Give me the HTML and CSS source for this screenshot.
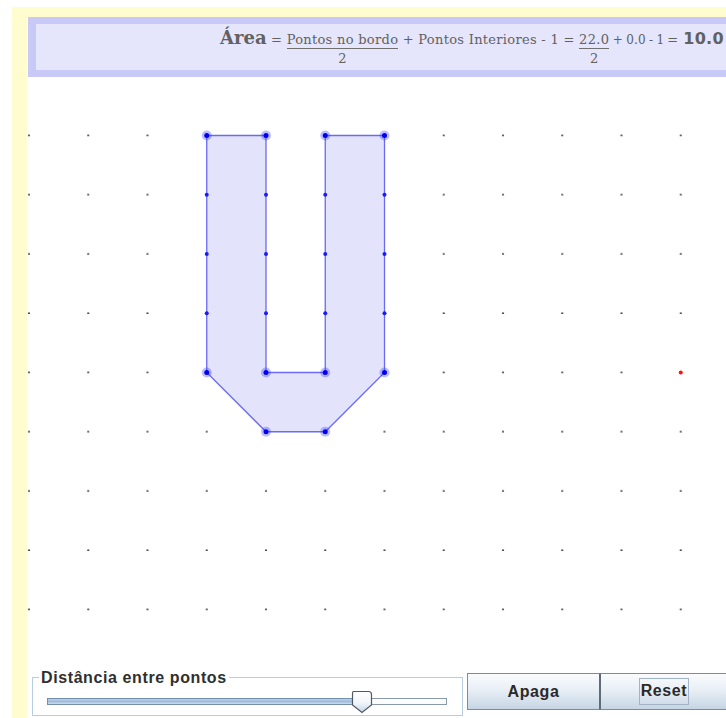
FILE: index.html
```html
<!DOCTYPE html>
<html lang="pt">
<head>
<meta charset="utf-8">
<title>Teorema de Pick</title>
<link rel="stylesheet" href="styles.css">
</head>
<body>
<div class="window">
  <div class="frame">
    <main class="board">
      <header class="formula">
        <span class="lhs">Área</span><span class="eq"> = </span><span class="frac"><span class="num">Pontos no bordo</span><span class="den">2</span></span><span class="term"> + Pontos Interiores - 1 = </span><span class="frac frac-value"><span class="num">22.0</span><span class="den">2</span></span><span class="term tail"> + 0.0 - 1</span><span class="eq-big">=</span><span class="result">10.0</span>
      </header>

      <svg class="grid" width="699" height="583" viewBox="0 0 699 583">
        <defs>
          <pattern id="lattice" patternUnits="userSpaceOnUse" x="0" y="0" width="59.25" height="59.25">
            <circle cx="2" cy="58.5" r="1.1" fill="#4a4a4a"/>
          </pattern>
        </defs>
        <rect x="0" y="0" width="699" height="583" fill="url(#lattice)"/>

        <!-- the U-shaped polygon -->
        <polygon class="shape"
          points="179.75,58.5 239,58.5 239,295.5 298.25,295.5 298.25,58.5 357.5,58.5 357.5,295.5 298.25,354.75 239,354.75 179.75,295.5"/>

        <!-- lattice points on the edges -->
        <g class="edge-pt">
          <circle cx="179.75" cy="117.75" r="2"/><circle cx="179.75" cy="177" r="2"/><circle cx="179.75" cy="236.25" r="2"/>
          <circle cx="239" cy="117.75" r="2"/><circle cx="239" cy="177" r="2"/><circle cx="239" cy="236.25" r="2"/>
          <circle cx="298.25" cy="117.75" r="2"/><circle cx="298.25" cy="177" r="2"/><circle cx="298.25" cy="236.25" r="2"/>
          <circle cx="357.5" cy="117.75" r="2"/><circle cx="357.5" cy="177" r="2"/><circle cx="357.5" cy="236.25" r="2"/>
        </g>

        <!-- vertices -->
        <g class="vertex-halo">
          <circle cx="179.75" cy="58.5" r="5"/><circle cx="239" cy="58.5" r="5"/><circle cx="298.25" cy="58.5" r="5"/><circle cx="357.5" cy="58.5" r="5"/>
          <circle cx="179.75" cy="295.5" r="5"/><circle cx="239" cy="295.5" r="5"/><circle cx="298.25" cy="295.5" r="5"/><circle cx="357.5" cy="295.5" r="5"/>
          <circle cx="239" cy="354.75" r="5"/><circle cx="298.25" cy="354.75" r="5"/>
        </g>
        <g class="vertex">
          <circle cx="179.75" cy="58.5" r="2.5"/><circle cx="239" cy="58.5" r="2.5"/><circle cx="298.25" cy="58.5" r="2.5"/><circle cx="357.5" cy="58.5" r="2.5"/>
          <circle cx="179.75" cy="295.5" r="2.5"/><circle cx="239" cy="295.5" r="2.5"/><circle cx="298.25" cy="295.5" r="2.5"/><circle cx="357.5" cy="295.5" r="2.5"/>
          <circle cx="239" cy="354.75" r="2.5"/><circle cx="298.25" cy="354.75" r="2.5"/>
        </g>

        <!-- pointer position -->
        <circle class="cursor" cx="653.75" cy="295.5" r="2"/>
      </svg>

      <div class="controls">
        <fieldset class="spacing">
          <legend>Distância entre pontos</legend>
          <svg class="slider" width="402" height="24" viewBox="0 0 402 24">
            <defs>
              <linearGradient id="fill" x1="0" y1="0" x2="0" y2="1">
                <stop offset="0" stop-color="#c3d6ea"/>
                <stop offset="0.5" stop-color="#9fbcdc"/>
                <stop offset="1" stop-color="#d6e3f1"/>
              </linearGradient>
              <linearGradient id="knob" x1="0" y1="0" x2="0" y2="1">
                <stop offset="0" stop-color="#ffffff"/>
                <stop offset="0.55" stop-color="#f2f6fb"/>
                <stop offset="1" stop-color="#bfd2e6"/>
              </linearGradient>
            </defs>
            <rect x="1.5" y="8.5" width="399" height="6" fill="#fbfcfd" stroke="#8c99a6"/>
            <rect x="1.5" y="8.5" width="314" height="6" fill="url(#fill)" stroke="#7590ad"/>
            <path d="M307.5 1.5 H322.5 Q325.5 1.5 325.5 4.5 V15 L316 22.5 L306.5 15 V4.5 Q306.5 1.5 307.5 1.5 Z" fill="url(#knob)" stroke="#4f5a66" stroke-width="1.2"/>
          </svg>
        </fieldset>
        <div class="buttons">
          <button class="btn btn-erase" type="button">Apaga</button>
          <button class="btn btn-reset" type="button"><span class="focus">Reset</span></button>
        </div>
      </div>
    </main>
  </div>
</div>
</body>
</html>
```

FILE: styles.css
```css
html, body {
  margin: 0;
  padding: 0;
  background: #ffffff;
  overflow: hidden;
}

.window {
  padding: 7px 0 0 12px;
  height: 718px;
  box-sizing: border-box;
}

.frame {
  background: #fffccf;
  padding: 10px 0 0 15px;
  height: 711px;
  box-sizing: border-box;
}

.board {
  display: block;
  background: #ffffff;
  height: 701px;
  overflow: hidden;
}

/* Pick's formula banner */
.formula {
  display: flex;
  align-items: baseline;
  margin-left: 1px;
  height: 60px;
  box-sizing: border-box;
  border: 7px solid #c9c9f7;
  border-left-width: 8px;
  border-right: none;
  background: #e5e5fc;
  padding: 5px 0 0 184px;
  white-space: pre;
  overflow: hidden;
  color: #616161;
  font-family: "DejaVu Serif", "Liberation Serif", serif;
  font-size: 13px;
  line-height: 18px;
  letter-spacing: 0.3px;
}

.lhs {
  font-weight: bold;
  font-size: 18px;
  letter-spacing: 0;
}

.eq {
  font-size: 13px;
}

.frac {
  display: inline-flex;
  flex-direction: column;
  align-items: center;
}

.num {
  border-bottom: 1px solid #707070;
  line-height: 17px;
}

.den {
  line-height: 17px;
  padding-top: 1px;
}

.tail {
  font-size: 12px;
  word-spacing: -0.5px;
  letter-spacing: 0.1px;
}

.eq-big {
  margin: 0 5px 0 3px;
  font-family: "DejaVu Sans", sans-serif;
  font-size: 13px;
  letter-spacing: 0;
}

.result {
  font-family: "DejaVu Sans", sans-serif;
  font-weight: bold;
  font-size: 16px;
  letter-spacing: 0.3px;
}

/* lattice canvas */
.grid {
  display: block;
  width: 699px;
  height: 583px;
}

.shape {
  fill: #e3e3fb;
  stroke: #6a6af4;
  stroke-width: 1.3;
}

.edge-pt circle {
  fill: #1a1aff;
}

.vertex-halo circle {
  fill: rgba(50, 50, 255, 0.32);
}

.vertex circle {
  fill: #0000f0;
}

.cursor {
  fill: #ff1010;
}

/* bottom controls */
.controls {
  display: flex;
  align-items: flex-start;
  gap: 4px;
  padding: 8px 0 0 5px;
  font-family: "Liberation Sans", Arial, sans-serif;
}

.spacing {
  width: 431px;
  flex: none;
  box-sizing: border-box;
  margin: 0;
  border: 1px solid #b9cde0;
  padding: 0 0 1px 13px;
}

.spacing legend {
  margin-left: -7px;
  padding: 0 2px;
  font-size: 16px;
  font-weight: bold;
  line-height: 19px;
  letter-spacing: 0.6px;
  color: #2f2f2f;
}

.slider {
  display: block;
  margin-top: 3px;
}

.buttons {
  display: flex;
  margin-top: 5px;
}

.btn {
  height: 37px;
  margin: 0;
  padding: 0;
  border: 1px solid #7e8b98;
  background: linear-gradient(#fafbfd 0%, #e9eff6 45%, #d3dfeb 80%, #c6d4e3 100%);
  font-family: "Liberation Sans", Arial, sans-serif;
  font-size: 16px;
  font-weight: bold;
  letter-spacing: 0.6px;
  color: #2a2a2a;
}

.btn-erase {
  width: 133px;
  border-right-color: #5f6b78;
}

.btn-reset {
  width: 128px;
  border-left-color: #5f6b78;
}

.focus {
  display: inline-block;
  padding: 3px 1px 4px;
  border: 1px solid #a3b3c6;
  line-height: 18px;
}
```
